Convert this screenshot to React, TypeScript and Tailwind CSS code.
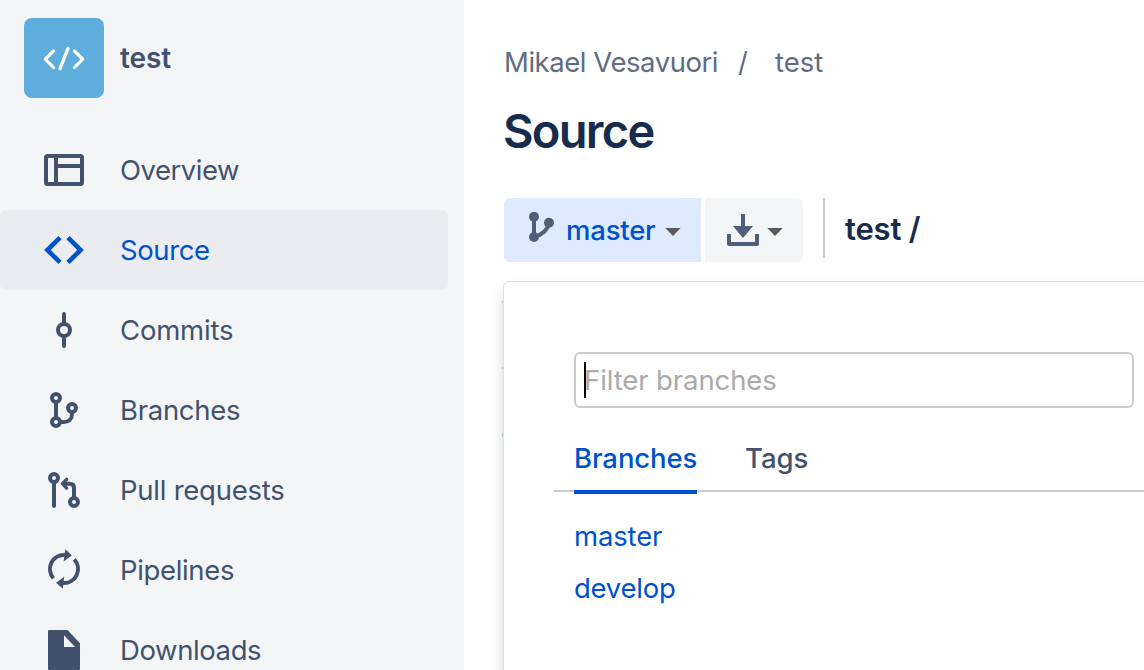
import type { ReactNode } from "react";

const stroke = {
  fill: "none",
  stroke: "currentColor",
  strokeWidth: 4,
  strokeLinecap: "round" as const,
  strokeLinejoin: "round" as const,
};

function Icon({ children }: { children: ReactNode }) {
  return (
    <svg viewBox="0 0 48 48" className="size-12 shrink-0">
      {children}
    </svg>
  );
}

const OverviewIcon = () => (
  <Icon>
    <g {...stroke}>
      <rect x="6" y="10" width="36" height="28" rx="1.5" />
      <path d="M16 10v28M16 20h26" strokeLinecap="butt" />
    </g>
  </Icon>
);

const SourceIcon = () => (
  <Icon>
    <path {...stroke} strokeLinecap="butt" strokeLinejoin="miter" strokeWidth={4.6} d="M20 11.6 7.4 24 20 36.4M28 11.6 40.6 24 28 36.4" />
  </Icon>
);

const CommitsIcon = () => (
  <Icon>
    <g {...stroke}>
      <circle cx="24" cy="24" r="6" />
      <path d="M24 8v9M24 31v9" />
    </g>
  </Icon>
);

const BranchesIcon = () => (
  <Icon>
    <g {...stroke}>
      <circle cx="16" cy="12" r="4" />
      <circle cx="32" cy="22" r="4" />
      <circle cx="16" cy="36" r="4" />
      <path d="M16 16v16M32 26v2c0 5-3 8-8 8h-4" />
    </g>
  </Icon>
);

const PullRequestsIcon = () => (
  <Icon>
    <g {...stroke}>
      <circle cx="14" cy="12" r="4" />
      <circle cx="34" cy="36" r="4" />
      <path d="M14 16v24M34 32V22c0-3-1.5-4.3-4.5-4.3h-5" />
      <path d="m26.6 13.3-4.1 4.4 4.1 4.4" strokeWidth="3.4" />
    </g>
  </Icon>
);

const PipelinesIcon = () => (
  <Icon>
    <path {...stroke} strokeLinecap="butt" d="M25 9A14 14 0 0 0 13.4 32.2M23 37A14 14 0 0 0 34.2 13.4" />
    <path fill="currentColor" d="m25.4 3.2 6.4 6.2-8.2 6zM22.8 42.8 16 36.8l8.2-6z" />
  </Icon>
);

const DownloadsIcon = () => (
  <Icon>
    <path
      fill="currentColor"
      fillRule="evenodd"
      d="M9 4h18.5L40 17.2V43a1 1 0 0 1-1 1H9a1 1 0 0 1-1-1V5a1 1 0 0 1 1-1zm15 5.3v11.6h11z"
    />
  </Icon>
);

const items = [
  { label: "Overview", icon: OverviewIcon, spacing: "tracking-[-0.5px]" },
  { label: "Source", icon: SourceIcon, spacing: "tracking-[-0.4px]", selected: true },
  { label: "Commits", icon: CommitsIcon, spacing: "tracking-[-0.2px]" },
  { label: "Branches", icon: BranchesIcon, spacing: "tracking-[-0.3px]" },
  { label: "Pull requests", icon: PullRequestsIcon, spacing: "tracking-[-0.25px]" },
  { label: "Pipelines", icon: PipelinesIcon, spacing: "tracking-[-0.35px]" },
  { label: "Downloads", icon: DownloadsIcon, spacing: "tracking-[-0.4px]" },
];

function Sidebar() {
  return (
    <aside className="h-full w-[464px] shrink-0 overflow-hidden bg-[#f4f5f7] text-[#42526e]">
      <div className="flex items-center gap-4 pt-[18px] pb-8 pl-6">
        <div className="size-20 rounded-lg bg-[#5eaddc]">
          <svg viewBox="0 0 80 80" className="size-20" fill="none" stroke="#fff" strokeWidth="3.2" strokeLinecap="round" strokeLinejoin="round">
            <path d="m29.5 33-8.2 8.2 8.2 8.3M44 30.3l-8 20.5M50.5 33l8.2 8.2-8.2 8.3" />
          </svg>
        </div>
        <span className="text-[28px] leading-10 font-[560] tracking-[-0.1px]">test</span>
      </div>
      <nav className="w-[448px]">
        {items.map(({ label, icon: ItemIcon, spacing, selected }) => (
          <a
            key={label}
            className={`flex h-20 items-center gap-8 rounded-md pl-10 ${selected ? "bg-[#ebecf0] text-[#0052cc]" : ""}`}
          >
            <ItemIcon />
            <span className={`text-[27.5px] leading-10 font-[430] whitespace-nowrap ${spacing}`}>{label}</span>
          </a>
        ))}
      </nav>
    </aside>
  );
}

const Caret = () => (
  <svg viewBox="0 0 16 8" className="mt-1 h-2 w-4 shrink-0">
    <path d="M.3 0h15.4L8 8z" fill="#595959" />
  </svg>
);

function BranchMenu() {
  return (
    <div className="absolute top-[281px] left-[503px] h-[420px] w-[680px] rounded-tl-md border border-[#dfe1e5] bg-white pt-[70px] pl-[50px] shadow-[0_8px_16px_-4px_rgba(9,30,66,0.3)]">
      <div className="ml-5 flex h-14 w-[560px] items-center rounded-md border-2 border-[#ccc] pl-2">
        <span className="h-9 w-0.5 bg-black" />
        <span className="-ml-0.5 text-[27.5px] leading-10 tracking-[-0.1px] text-[#aaa]">Filter branches</span>
      </div>
      <div className="mt-[30px] flex h-[54px] border-b-2 border-[#ccc] pl-5 text-[27.5px] leading-10 font-[480]">
        <span className="h-14 w-[123px] border-b-4 border-[#0052cc] tracking-[-0.1px] whitespace-nowrap text-[#0052cc]">Branches</span>
        <span className="ml-12 text-[#42526e]">Tags</span>
      </div>
      <div className="mt-[18px] flex flex-col pl-5 text-[27.5px] leading-[52px] tracking-[-0.25px] text-[#0052cc]">
        <span className="tracking-[-0.15px]">master</span>
        <span>develop</span>
      </div>
    </div>
  );
}

export default function App() {
  return (
    <div className="relative flex h-[670px] w-[1144px] overflow-hidden bg-white font-['Inter',sans-serif]">
      <Sidebar />
      <main className="flex min-w-0 flex-1 flex-col pt-[43px] pl-10">
        <div className="flex h-10 items-center text-[27.5px] font-[430] whitespace-nowrap text-[#5e6c84]">
          <span className="w-[234px] tracking-[-0.45px]">Mikael Vesavuori</span>
          <span className="w-[37px]">/</span>
          <span>test</span>
        </div>
        <h1 className="mt-[18px] -ml-px h-[60px] text-[47px] leading-[60px] font-[560] tracking-[-1.7px] text-[#172b4d]">Source</h1>
        <div className="mt-[37px] flex h-16 shrink-0">
          <button className="flex w-[197px] items-center rounded-l-md bg-[#deebff] pl-[23px] text-[#0052cc]">
            <svg viewBox="0 0 30 36" className="h-9 w-[30px] shrink-0 text-[#505f79]">
              <g fill="currentColor">
                <circle cx="7" cy="4.7" r="5" />
                <circle cx="22" cy="10.7" r="5" />
                <circle cx="7" cy="25" r="5" />
              </g>
              <path d="M7 5v20C15 23 21 17.5 22 11" fill="none" stroke="currentColor" strokeWidth="4" />
            </svg>
            <span className="ml-[9px] w-[99px] text-left text-[27.5px] leading-10 font-[470] tracking-[-0.2px]">master</span>
            <Caret />
          </button>
          <button className="ml-1 flex w-[98px] items-center rounded-r-md bg-[#f4f5f7] pl-[22px]">
            <svg viewBox="0 0 32 32" className="size-8 shrink-0 text-[#505f79]">
              <path d="M14 0h4v12h8L16 24 6 12h8z" fill="currentColor" />
              <path d="M2 20v10h28V20" fill="none" stroke="currentColor" strokeWidth="4" strokeLinejoin="round" />
            </svg>
            <span className="ml-2 flex">
              <Caret />
            </span>
          </button>
          <div className="ml-5 h-[60px] w-0.5 bg-[#ccc]" />
          <span className="ml-5 text-[31px] leading-[62px] font-[570] tracking-[-0.2px] text-[#172b4d]">test /</span>
        </div>
        <div className="mt-[39px] -ml-0.5 shrink-0">
          <div className="h-[66px] border-t-2 border-[#ccc]" />
          <div className="h-[66px] border-t-2 border-[#ccc]" />
          <div className="h-[66px] border-t-4 border-[#c1d0e2]" />
        </div>
      </main>
      <BranchMenu />
    </div>
  );
}
